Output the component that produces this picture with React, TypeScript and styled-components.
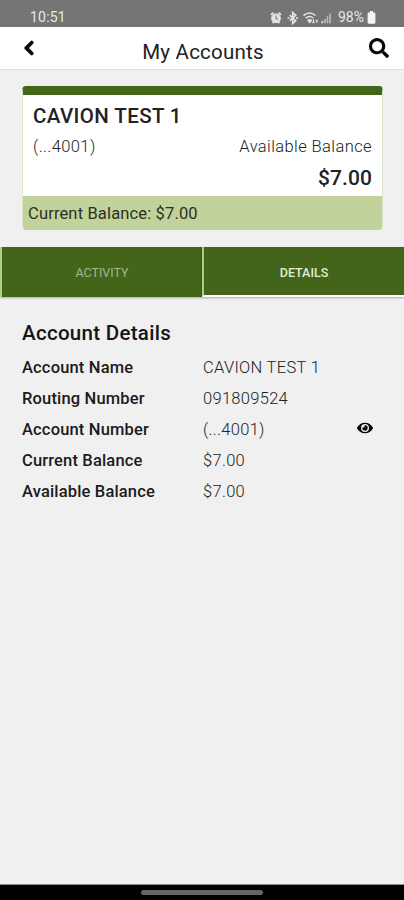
import React from "react";
import styled, { createGlobalStyle } from "styled-components";
import { FaChevronLeft, FaEye, FaSearch } from "react-icons/fa";

const GlobalStyle = createGlobalStyle`
  * { box-sizing: border-box; }
  body { margin: 0; background: #f0f0f0; font-family: Roboto, sans-serif; }
`;

const Screen = styled.div`
  width: 404px;
  height: 900px;
  display: flex;
  flex-direction: column;
  background: #f0f0f0;
  color: #222;
  overflow: hidden;
`;

const StatusBar = styled.div`
  height: 27px;
  flex: none;
  display: flex;
  align-items: center;
  justify-content: space-between;
  padding: 8px 28px 0 30px;
  background: #757575;
  color: #e8e8e8;
  font-size: 14px;
  line-height: 19px;
`;

const Clock = styled.span`
  letter-spacing: 0.2px;
`;

const StatusIcons = styled.div`
  display: flex;
  align-items: center;
  svg { display: block; }
`;

const Percent = styled.span`
  margin-left: 4px;
  width: 29px;
  white-space: nowrap;
`;

const Header = styled.header`
  height: 43px;
  flex: none;
  display: grid;
  grid-template-columns: 50px 1fr 50px;
  align-items: center;
  background: #fff;
  border-bottom: 1px solid #dedede;
`;

const Title = styled.h1`
  margin: 7px 0 0 2px;
  text-align: center;
  font-size: 20.5px;
  line-height: 24px;
  font-weight: 400;
  letter-spacing: 0.22px;
  color: #222;
`;

const IconButton = styled.button<{ $size: number }>`
  display: flex;
  justify-content: center;
  padding: 0;
  border: 0;
  background: none;
  color: #080808;
  font-size: ${(p) => p.$size}px;
`;

const BackButton = styled(IconButton)`
  padding-left: 7px;
  svg {
    overflow: visible;
    stroke: #080808;
    stroke-width: 38px;
  }
`;

const EyeButton = styled(IconButton)`
  padding-bottom: 3px;
`;

const Card = styled.section`
  height: 144px;
  flex: none;
  margin: 16px 21px 0 22px;
  display: flex;
  flex-direction: column;
  border-radius: 4px;
  overflow: hidden;
  background: #fff;
  border-right: 1px solid #dce6cc;
  border-left: 1px solid #dce6cc;
  border-top: 9px solid #42651a;
`;

const CardBody = styled.div`
  flex: 1;
  padding: 8px 10px 0;
`;

const CardTitle = styled.h2`
  margin: 0;
  font-size: 20.5px;
  line-height: 26px;
  font-weight: 500;
  letter-spacing: 0.4px;
`;

const CardLine = styled.div`
  display: flex;
  justify-content: space-between;
  margin-top: 6px;
  font-size: 16.5px;
  line-height: 24px;
  font-weight: 300;
  letter-spacing: 0.4px;
`;

const Amount = styled.div`
  margin-top: 6px;
  text-align: right;
  font-size: 21px;
  line-height: 26px;
  font-weight: 500;
  letter-spacing: 0.1px;
`;

const CardFooter = styled.div`
  height: 34px;
  margin: 0 -1px;
  padding: 1px 6px 0;
  background: #c1d39b;
  color: #2c3025;
  font-size: 16.5px;
  line-height: 34px;
  letter-spacing: 0.15px;
`;

const Tabs = styled.nav`
  height: 50px;
  flex: none;
  margin-top: 17px;
  display: grid;
  grid-template-columns: 202px 202px;
`;

const Tab = styled.button<{ $active?: boolean }>`
  padding: ${(p) => (p.$active ? "2px 0 0" : "1px 0 0")};
  border: 0 solid #b2cb85;
  border-left-width: 2px;
  border-bottom: ${(p) => (p.$active ? "2px solid #fff" : "0")};
  background: #42651a;
  box-shadow: 0 1px 2px rgba(0, 0, 0, 0.3);
  color: ${(p) => (p.$active ? "#e3ead7" : "#a7b78f")};
  font-family: inherit;
  font-size: 12.5px;
  font-weight: ${(p) => (p.$active ? 500 : 400)};
`;

const Details = styled.main`
  flex: 1;
  padding: 24px 22px 0;
`;

const DetailsTitle = styled.h2`
  margin: 0 0 6px;
  font-size: 20.5px;
  line-height: 25px;
  font-weight: 500;
  letter-spacing: 0.3px;
  color: #151515;
`;

const DetailRow = styled.div`
  display: grid;
  grid-template-columns: 181px 1fr 34px;
  align-items: center;
  height: 31.2px;
  font-size: 16.5px;
  line-height: 24px;
`;

const Label = styled.span`
  font-weight: 500;
  letter-spacing: 0.16px;
  color: #1b1b1b;
`;

const Value = styled.span`
  font-weight: 300;
  letter-spacing: 0.3px;
`;

const NavBar = styled.div`
  height: 16px;
  flex: none;
  display: flex;
  justify-content: center;
  padding-top: 5px;
  background: #000;
  border-top: 1px solid #8c8f8c;
`;

const NavHandle = styled.div`
  width: 122px;
  height: 5px;
  border-radius: 3px;
  background: #666;
`;

const rows = [
  { label: "Account Name", value: "CAVION TEST 1" },
  { label: "Routing Number", value: "091809524" },
  { label: "Account Number", value: "(...4001)", hidden: true },
  { label: "Current Balance", value: "$7.00" },
  { label: "Available Balance", value: "$7.00" },
];

const StatusGlyphs = () => (
  <svg width="64" height="14" viewBox="0 0 64 14" fill="none" stroke="#e5e5e5">
    <circle cx="6" cy="7.3" r="4.4" fill="#e5e5e5" />
    <path d="M1 3.8 3.5 1.8M11 3.8 8.5 1.8M2.5 12 3.5 11M9.5 12 8.5 11" strokeWidth="1.8" />
    <path d="M6 4.5v3l2 1" stroke="#757575" strokeWidth="1.1" />
    <path d="m19.7 4.2 6 5.5-3 2.8V1.5l3 2.8-6 5.4M17.5 7h2M26 7h2" strokeWidth="1.6" />
    <path d="M33.5 4.5c3.8-3 8.5-3 12 0M35.8 7c2.5-1.9 5.2-1.9 7.5 0M38 9.3c1.1-.8 2.2-.8 3.3 0l-1.6 2z" strokeWidth="1.6" />
    <path d="M43.5 12V8m-1.3 2.7 1.3 1.5 1.3-1.5M46.8 12V9m-1 1 1-1.2 1 1.2" strokeWidth="1" />
    <path d="M52.3 12.3v-2.2" strokeWidth="1.7" />
    <path d="M55 12.3V8M57.4 12.3V5.2M60 12.3V2.6" stroke="#bcbcbc" strokeWidth="1.6" />
  </svg>
);

const Battery = () => (
  <svg width="9" height="13" viewBox="0 0 9 13" fill="#f5f5f5">
    <path d="M3 0h3v1.5h1.2c.7 0 1.2.5 1.2 1.2v8.8c0 .7-.5 1.2-1.2 1.2H1.8c-.7 0-1.2-.5-1.2-1.2V2.7c0-.7.5-1.2 1.2-1.2H3z" />
  </svg>
);

export default function App() {
  return (
    <>
      <GlobalStyle />
      <Screen>
        <StatusBar>
          <Clock>10:51</Clock>
          <StatusIcons>
            <StatusGlyphs />
            <Percent>98%</Percent>
            <Battery />
          </StatusIcons>
        </StatusBar>
        <Header>
          <BackButton $size={16} aria-label="Back"><FaChevronLeft /></BackButton>
          <Title>My Accounts</Title>
          <IconButton $size={20} aria-label="Search"><FaSearch /></IconButton>
        </Header>
        <Card>
          <CardBody>
            <CardTitle>CAVION TEST 1</CardTitle>
            <CardLine>
              <span>(...4001)</span>
              <span>Available Balance</span>
            </CardLine>
            <Amount>$7.00</Amount>
          </CardBody>
          <CardFooter>Current Balance: $7.00</CardFooter>
        </Card>
        <Tabs>
          <Tab>ACTIVITY</Tab>
          <Tab $active>DETAILS</Tab>
        </Tabs>
        <Details>
          <DetailsTitle>Account Details</DetailsTitle>
          {rows.map((row) => (
            <DetailRow key={row.label}>
              <Label>{row.label}</Label>
              <Value>{row.value}</Value>
              {row.hidden && (
                <EyeButton $size={16} aria-label="Show account number"><FaEye /></EyeButton>
              )}
            </DetailRow>
          ))}
        </Details>
        <NavBar><NavHandle /></NavBar>
      </Screen>
    </>
  );
}
